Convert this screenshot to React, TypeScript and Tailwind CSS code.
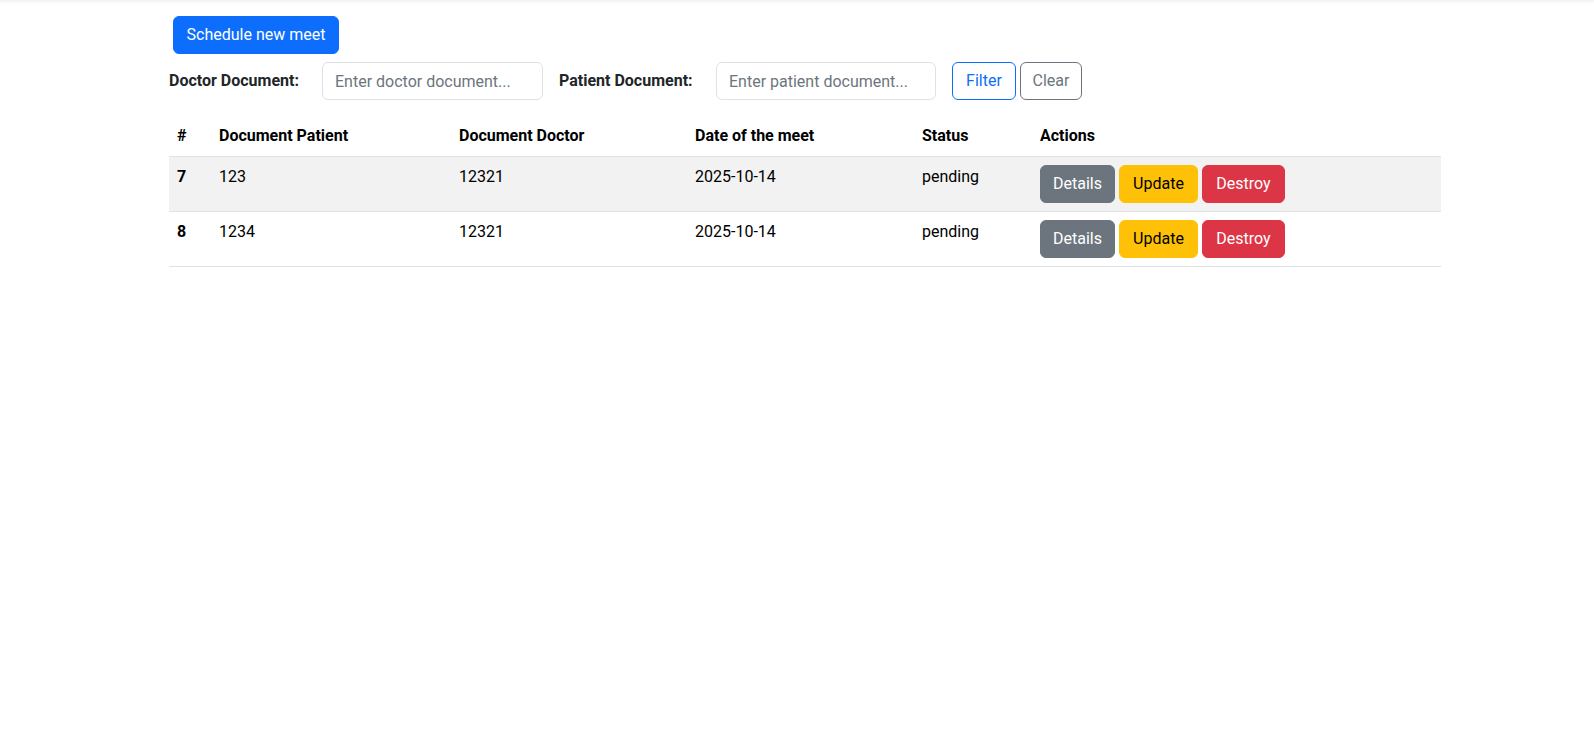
import React, { useState } from "react";

interface Meet {
  id: number;
  patient: string;
  doctor: string;
  date: string;
  status: string;
}

const MEETS: Meet[] = [
  { id: 7, patient: "123", doctor: "12321", date: "2025-10-14", status: "pending" },
  { id: 8, patient: "1234", doctor: "12321", date: "2025-10-14", status: "pending" },
];

const App = () => {
  const [doctorDoc, setDoctorDoc] = useState("");
  const [patientDoc, setPatientDoc] = useState("");

  const onClear = () => {
    setDoctorDoc("");
    setPatientDoc("");
  };

  return (
    <div className="min-h-screen bg-white text-[16px] leading-6 text-[#212529] font-['Roboto','Liberation_Sans',sans-serif]">
      <div className="h-[4px] bg-gradient-to-b from-[#f2f2f2] to-white" />
      <div className="ml-[169px] w-[1272px]">
        <button className="mt-[12px] ml-[4px] h-[38px] w-[166px] rounded-[6px] border border-[#0d6efd] bg-[#0d6efd] text-white">
          Schedule new meet
        </button>

        <div className="mt-[8px] flex items-center">
          <label className="w-[153px] font-bold">Doctor Document:</label>
          <input
            value={doctorDoc}
            onChange={(e) => setDoctorDoc(e.target.value)}
            placeholder="Enter doctor document..."
            className="h-[38px] w-[221px] rounded-[6px] border border-[#dee2e6] px-3 outline-none placeholder-[#6c757d]"
          />
          <label className="ml-4 w-[157px] font-bold">Patient Document:</label>
          <input
            value={patientDoc}
            onChange={(e) => setPatientDoc(e.target.value)}
            placeholder="Enter patient document..."
            className="h-[38px] w-[220px] rounded-[6px] border border-[#dee2e6] px-3 outline-none placeholder-[#6c757d]"
          />
          <button className="ml-4 h-[38px] w-[64px] rounded-[6px] border border-[#0d6efd] text-[#0d6efd]">
            Filter
          </button>
          <button
            onClick={onClear}
            className="ml-1 h-[38px] w-[62px] rounded-[6px] border border-[#6c757d] text-[#6c757d]"
          >
            Clear
          </button>
        </div>

        <table className="mt-4 w-full table-fixed border-collapse text-black">
          <thead>
            <tr className="border-b border-[#dee2e6]">
              <th className="w-[42px] p-2 text-left font-bold">#</th>
              <th className="w-[240px] p-2 text-left font-bold">Document Patient</th>
              <th className="w-[236px] p-2 text-left font-bold">Document Doctor</th>
              <th className="w-[227px] p-2 text-left font-bold">Date of the meet</th>
              <th className="w-[118px] p-2 text-left font-bold">Status</th>
              <th className="p-2 text-left font-bold">Actions</th>
            </tr>
          </thead>
          <tbody>
            {MEETS.map((meet, i) => (
              <tr
                key={meet.id}
                className={`border-b border-[#dee2e6] align-top ${i % 2 === 0 ? "bg-[#f2f2f2]" : "bg-white"}`}
              >
                <th className="p-2 text-left font-bold">{meet.id}</th>
                <td className="p-2">{meet.patient}</td>
                <td className="p-2">{meet.doctor}</td>
                <td className="p-2">{meet.date}</td>
                <td className="p-2">{meet.status}</td>
                <td className="p-2">
                  <div className="flex gap-1">
                    <button className="h-[38px] w-[75px] rounded-[6px] border border-[#6c757d] bg-[#6c757d] text-white">
                      Details
                    </button>
                    <button className="h-[38px] w-[79px] rounded-[6px] border border-[#ffc107] bg-[#ffc107] text-black">
                      Update
                    </button>
                    <button className="h-[38px] w-[83px] rounded-[6px] border border-[#dc3545] bg-[#dc3545] text-white">
                      Destroy
                    </button>
                  </div>
                </td>
              </tr>
            ))}
          </tbody>
        </table>
      </div>
    </div>
  );
};

export default App;
